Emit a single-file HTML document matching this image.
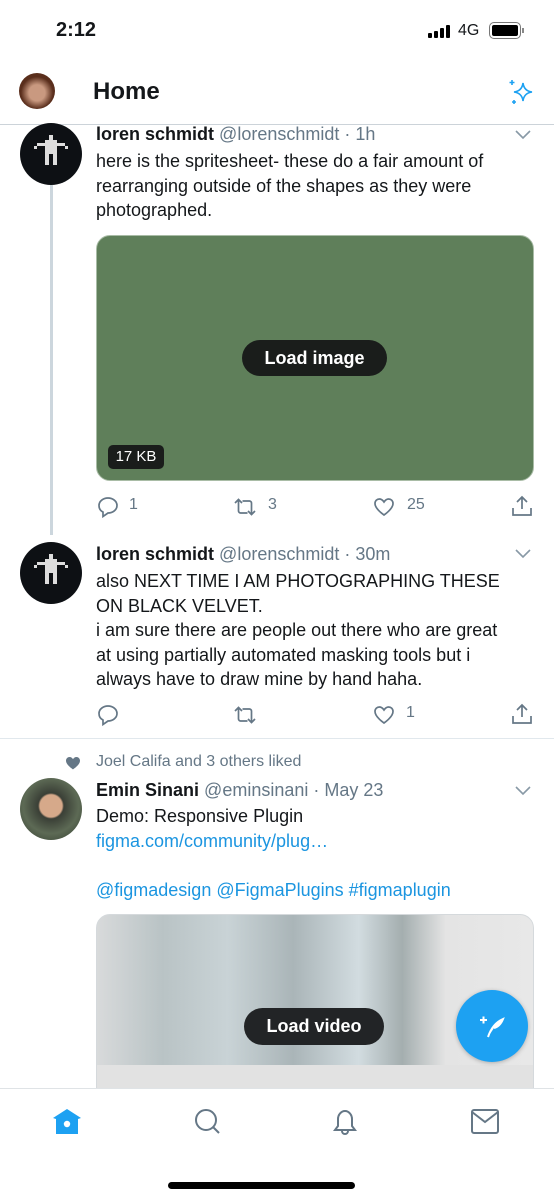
<!DOCTYPE html>
<html><head><meta charset="utf-8"><style>
*{margin:0;padding:0;box-sizing:border-box}
body{width:554px;height:1200px;position:relative;overflow:hidden;background:#fff;font-family:"Liberation Sans",sans-serif;color:#14171a}
.a{position:absolute;white-space:nowrap}
.t{font-size:18px;line-height:24.5px}
.g{color:#657786}
.b{font-weight:bold}
.av{position:absolute;width:62px;height:62px;border-radius:50%;background:#0d1014}
.lnk{color:#1b95e0}
svg{position:absolute}
</style></head><body>
<div class="a" style="left:56px;top:19px;font-size:20px;font-weight:bold;">2:12</div>
<div class="a" style="left:428px;top:24px;display:flex;align-items:flex-end;gap:2px;height:14px">
<div style="width:4px;height:5px;background:#000;border-radius:1px"></div><div style="width:4px;height:7px;background:#000;border-radius:1px"></div><div style="width:4px;height:10px;background:#000;border-radius:1px"></div><div style="width:4px;height:13px;background:#000;border-radius:1px"></div></div>
<div class="a" style="left:458px;top:22px;font-size:16px">4G</div>
<div class="a" style="left:489px;top:22px;width:32px;height:17px;border:1.5px solid #777;border-radius:5px;padding:2px"><div style="width:100%;height:100%;background:#000;border-radius:2px"></div></div>
<div class="a" style="left:522px;top:28px;width:2px;height:5px;background:#888"></div>

<div class="av" style="left:19px;top:73px;width:36px;height:36px;background:radial-gradient(circle at 50% 55%,#c99980 0 30%,#5a2e1c 60%)"></div>
<div class="a b" style="left:93px;top:78px;font-size:24px">Home</div>
<svg style="left:507px;top:77px" width="30" height="30" viewBox="0 0 30 30" fill="none" stroke="#1da1f2" stroke-width="1.6"><path d="M16 6 Q17 14 25 15 Q17 16 16 24 Q15 16 7 15 Q15 14 16 6Z"/><path d="M5 3v5M2.5 5.5h5M7 23v4M5 25h4"/></svg>
<div class="a" style="left:0;top:124px;width:554px;height:1px;background:#ccd3d9"></div>

<div class="a" style="left:50px;top:185px;width:3px;height:350px;background:#ccd6dd"></div>
<div class="av" style="left:20px;top:123px"></div>
<svg style="left:20px;top:123px" width="62" height="62" viewBox="0 0 62 62" fill="#ddd"><rect x="29" y="12" width="4" height="5"/><rect x="25" y="17" width="12" height="14"/><rect x="17" y="20" width="8" height="3"/><rect x="37" y="20" width="8" height="3"/><rect x="14" y="23" width="3" height="3"/><rect x="45" y="23" width="3" height="3"/><rect x="25" y="31" width="4" height="11"/><rect x="33" y="31" width="4" height="11"/></svg>
<div class="a t" style="left:96px;top:122px"><span class="b">loren schmidt</span> <span class="g">@lorenschmidt · 1h</span></div>
<svg style="left:515px;top:130px" width="16" height="10" viewBox="0 0 16 10"><path d="M1 1l7 7 7-7" fill="none" stroke="#8899a6" stroke-width="1.6"/></svg>
<div class="a t" style="left:96px;top:149px">here is the spritesheet- these do a fair amount of<br>rearranging outside of the shapes as they were<br>photographed.</div>
<div class="a" style="left:96px;top:235px;width:438px;height:246px;border-radius:14px;background:#5f7f5a;border:1px solid #a9bca6"></div>
<div class="a b" style="left:242px;top:340px;width:145px;height:36px;border-radius:18px;background:#1a1d1b;color:#fff;font-size:18px;text-align:center;line-height:36px">Load image</div>
<div class="a" style="left:108px;top:445px;width:56px;height:24px;border-radius:5px;background:#1a1d1b;color:#fff;font-size:15px;text-align:center;line-height:24px">17 KB</div>

<svg style="left:96px;top:495px" width="24" height="24" viewBox="0 0 24 24" fill="none" stroke="#657786" stroke-width="1.7"><path d="M12 3c5 0 9 3.3 9 7.5S17 18 12 18l-5 3.5V17C4.5 15.8 3 13.5 3 10.5 3 6.3 7 3 12 3z"/></svg>
<div class="a g" style="left:129px;top:496px;font-size:16px">1</div>
<svg style="left:232px;top:495px" width="26" height="24" viewBox="0 0 26 24" fill="none" stroke="#657786" stroke-width="1.7"><path d="M3 8l3.5-3.5L10 8M6.5 5v11c0 1 1 2 2 2h7M23 16l-3.5 3.5L16 16M19.5 19V8c0-1-1-2-2-2h-7"/></svg>
<div class="a g" style="left:268px;top:496px;font-size:16px">3</div>
<svg style="left:372px;top:495px" width="24" height="24" viewBox="0 0 24 24" fill="none" stroke="#657786" stroke-width="1.7"><path d="M12 20S3 14 3 8.5C3 5.5 5.2 4 7.4 4 9.6 4 11 5.5 12 7c1-1.5 2.4-3 4.6-3C18.8 4 21 5.5 21 8.5 21 14 12 20 12 20z"/></svg>
<div class="a g" style="left:407px;top:496px;font-size:16px">25</div>
<svg style="left:510px;top:494px" width="24" height="24" viewBox="0 0 24 24" fill="none" stroke="#657786" stroke-width="1.7"><path d="M12 15V3M7 8l5-5 5 5M3 14v7h18v-7"/></svg>

<div class="av" style="left:20px;top:542px"></div>
<svg style="left:20px;top:542px" width="62" height="62" viewBox="0 0 62 62" fill="#ddd"><rect x="29" y="12" width="4" height="5"/><rect x="25" y="17" width="12" height="14"/><rect x="17" y="20" width="8" height="3"/><rect x="37" y="20" width="8" height="3"/><rect x="14" y="23" width="3" height="3"/><rect x="45" y="23" width="3" height="3"/><rect x="25" y="31" width="4" height="11"/><rect x="33" y="31" width="4" height="11"/></svg>
<div class="a t" style="left:96px;top:542px"><span class="b">loren schmidt</span> <span class="g">@lorenschmidt · 30m</span></div>
<svg style="left:515px;top:549px" width="16" height="10" viewBox="0 0 16 10"><path d="M1 1l7 7 7-7" fill="none" stroke="#8899a6" stroke-width="1.6"/></svg>
<div class="a t" style="left:96px;top:569px">also NEXT TIME I AM PHOTOGRAPHING THESE<br>ON BLACK VELVET.<br>i am sure there are people out there who are great<br>at using partially automated masking tools but i<br>always have to draw mine by hand haha.</div>
<svg style="left:96px;top:703px" width="24" height="24" viewBox="0 0 24 24" fill="none" stroke="#657786" stroke-width="1.7"><path d="M12 3c5 0 9 3.3 9 7.5S17 18 12 18l-5 3.5V17C4.5 15.8 3 13.5 3 10.5 3 6.3 7 3 12 3z"/></svg>
<svg style="left:232px;top:703px" width="26" height="24" viewBox="0 0 26 24" fill="none" stroke="#657786" stroke-width="1.7"><path d="M3 8l3.5-3.5L10 8M6.5 5v11c0 1 1 2 2 2h7M23 16l-3.5 3.5L16 16M19.5 19V8c0-1-1-2-2-2h-7"/></svg>
<svg style="left:372px;top:703px" width="24" height="24" viewBox="0 0 24 24" fill="none" stroke="#657786" stroke-width="1.7"><path d="M12 20S3 14 3 8.5C3 5.5 5.2 4 7.4 4 9.6 4 11 5.5 12 7c1-1.5 2.4-3 4.6-3C18.8 4 21 5.5 21 8.5 21 14 12 20 12 20z"/></svg>
<div class="a g" style="left:406px;top:704px;font-size:16px">1</div>
<svg style="left:510px;top:702px" width="24" height="24" viewBox="0 0 24 24" fill="none" stroke="#657786" stroke-width="1.7"><path d="M12 15V3M7 8l5-5 5 5M3 14v7h18v-7"/></svg>
<div class="a" style="left:0;top:738px;width:554px;height:1px;background:#e1e8ed"></div>

<svg style="left:65px;top:756px" width="16" height="14" viewBox="0 0 24 22"><path d="M12 21S1 14 1 7.5C1 4 3.5 1.5 6.5 1.5 9 1.5 11 3 12 5c1-2 3-3.5 5.5-3.5 3 0 5.5 2.5 5.5 6C23 14 12 21 12 21z" fill="#657786"/></svg>
<div class="a g" style="left:96px;top:753px;font-size:16px">Joel Califa and 3 others liked</div>
<div class="av" style="left:20px;top:778px;background:radial-gradient(circle at 50% 45%,#d6a98a 0 24%,#3a3f36 28%,#5d6a55 60%,#2f3a2c)"></div>
<div class="a t" style="left:96px;top:778px"><span class="b">Emin Sinani</span> <span class="g">@eminsinani · May 23</span></div>
<svg style="left:515px;top:786px" width="16" height="10" viewBox="0 0 16 10"><path d="M1 1l7 7 7-7" fill="none" stroke="#8899a6" stroke-width="1.6"/></svg>
<div class="a t" style="left:96px;top:804px">Demo: Responsive Plugin<br><span class="lnk">figma.com/community/plug…</span><br><br><span class="lnk">@figmadesign @FigmaPlugins #figmaplugin</span></div>
<div class="a" style="left:96px;top:914px;width:438px;height:200px;border-radius:14px;border:1px solid #d5d9dc;background:linear-gradient(90deg,#d8dadb,#b9c3c5 15%,#c9d3d6 30%,#aab5b8 45%,#d2dce0 60%,#a4aeaf 70%,#e4e4e4 80%,#e8e8e8);overflow:hidden"><div style="position:absolute;left:0;right:0;top:150px;bottom:0;background:#e2e2e2"></div></div>
<div class="a b" style="left:244px;top:1008px;width:140px;height:37px;border-radius:19px;background:#222426;color:#fff;font-size:18px;text-align:center;line-height:37px">Load video</div>
<div class="a" style="left:456px;top:990px;width:72px;height:72px;border-radius:50%;background:#1da1f2;box-shadow:0 1px 4px rgba(0,0,0,.25)"></div>
<svg style="left:476px;top:1010px" width="32" height="32" viewBox="0 0 32 32" fill="none" stroke="#fff" stroke-width="2"><path d="M4 10h7M7.5 6.5v7"/><path d="M12 27c3-9 8-15 15-18-2 5-5 8-9 9" fill="#fff"/></svg>

<div class="a" style="left:0;top:1088px;width:554px;height:112px;background:#fff;border-top:1px solid #dfe3e6"></div>
<svg style="left:52px;top:1107px" width="30" height="30" viewBox="0 0 30 30"><path d="M15 2 L29 11 L26 12 V27 H4 V12 L1 11 Z" fill="#1da1f2"/><circle cx="15" cy="17" r="3.2" fill="#fff"/></svg>
<svg style="left:192px;top:1106px" width="32" height="32" viewBox="0 0 32 32" fill="none" stroke="#657786" stroke-width="2"><circle cx="14" cy="14" r="10"/><path d="M21 21l6 6"/></svg>
<svg style="left:330px;top:1106px" width="30" height="32" viewBox="0 0 30 32" fill="none" stroke="#657786" stroke-width="2"><path d="M5 24h20l-3-4v-7c0-4-3-8-7-8s-7 4-7 8v7z"/><path d="M12 25a3 3 0 0 0 6 0"/></svg>
<svg style="left:469px;top:1107px" width="32" height="30" viewBox="0 0 32 30" fill="none" stroke="#657786" stroke-width="2"><rect x="3" y="3" width="26" height="23" rx="2"/><path d="M3 5l13 10 13-10"/></svg>
<div class="a" style="left:168px;top:1182px;width:187px;height:7px;border-radius:4px;background:#000"></div>
</body></html>
